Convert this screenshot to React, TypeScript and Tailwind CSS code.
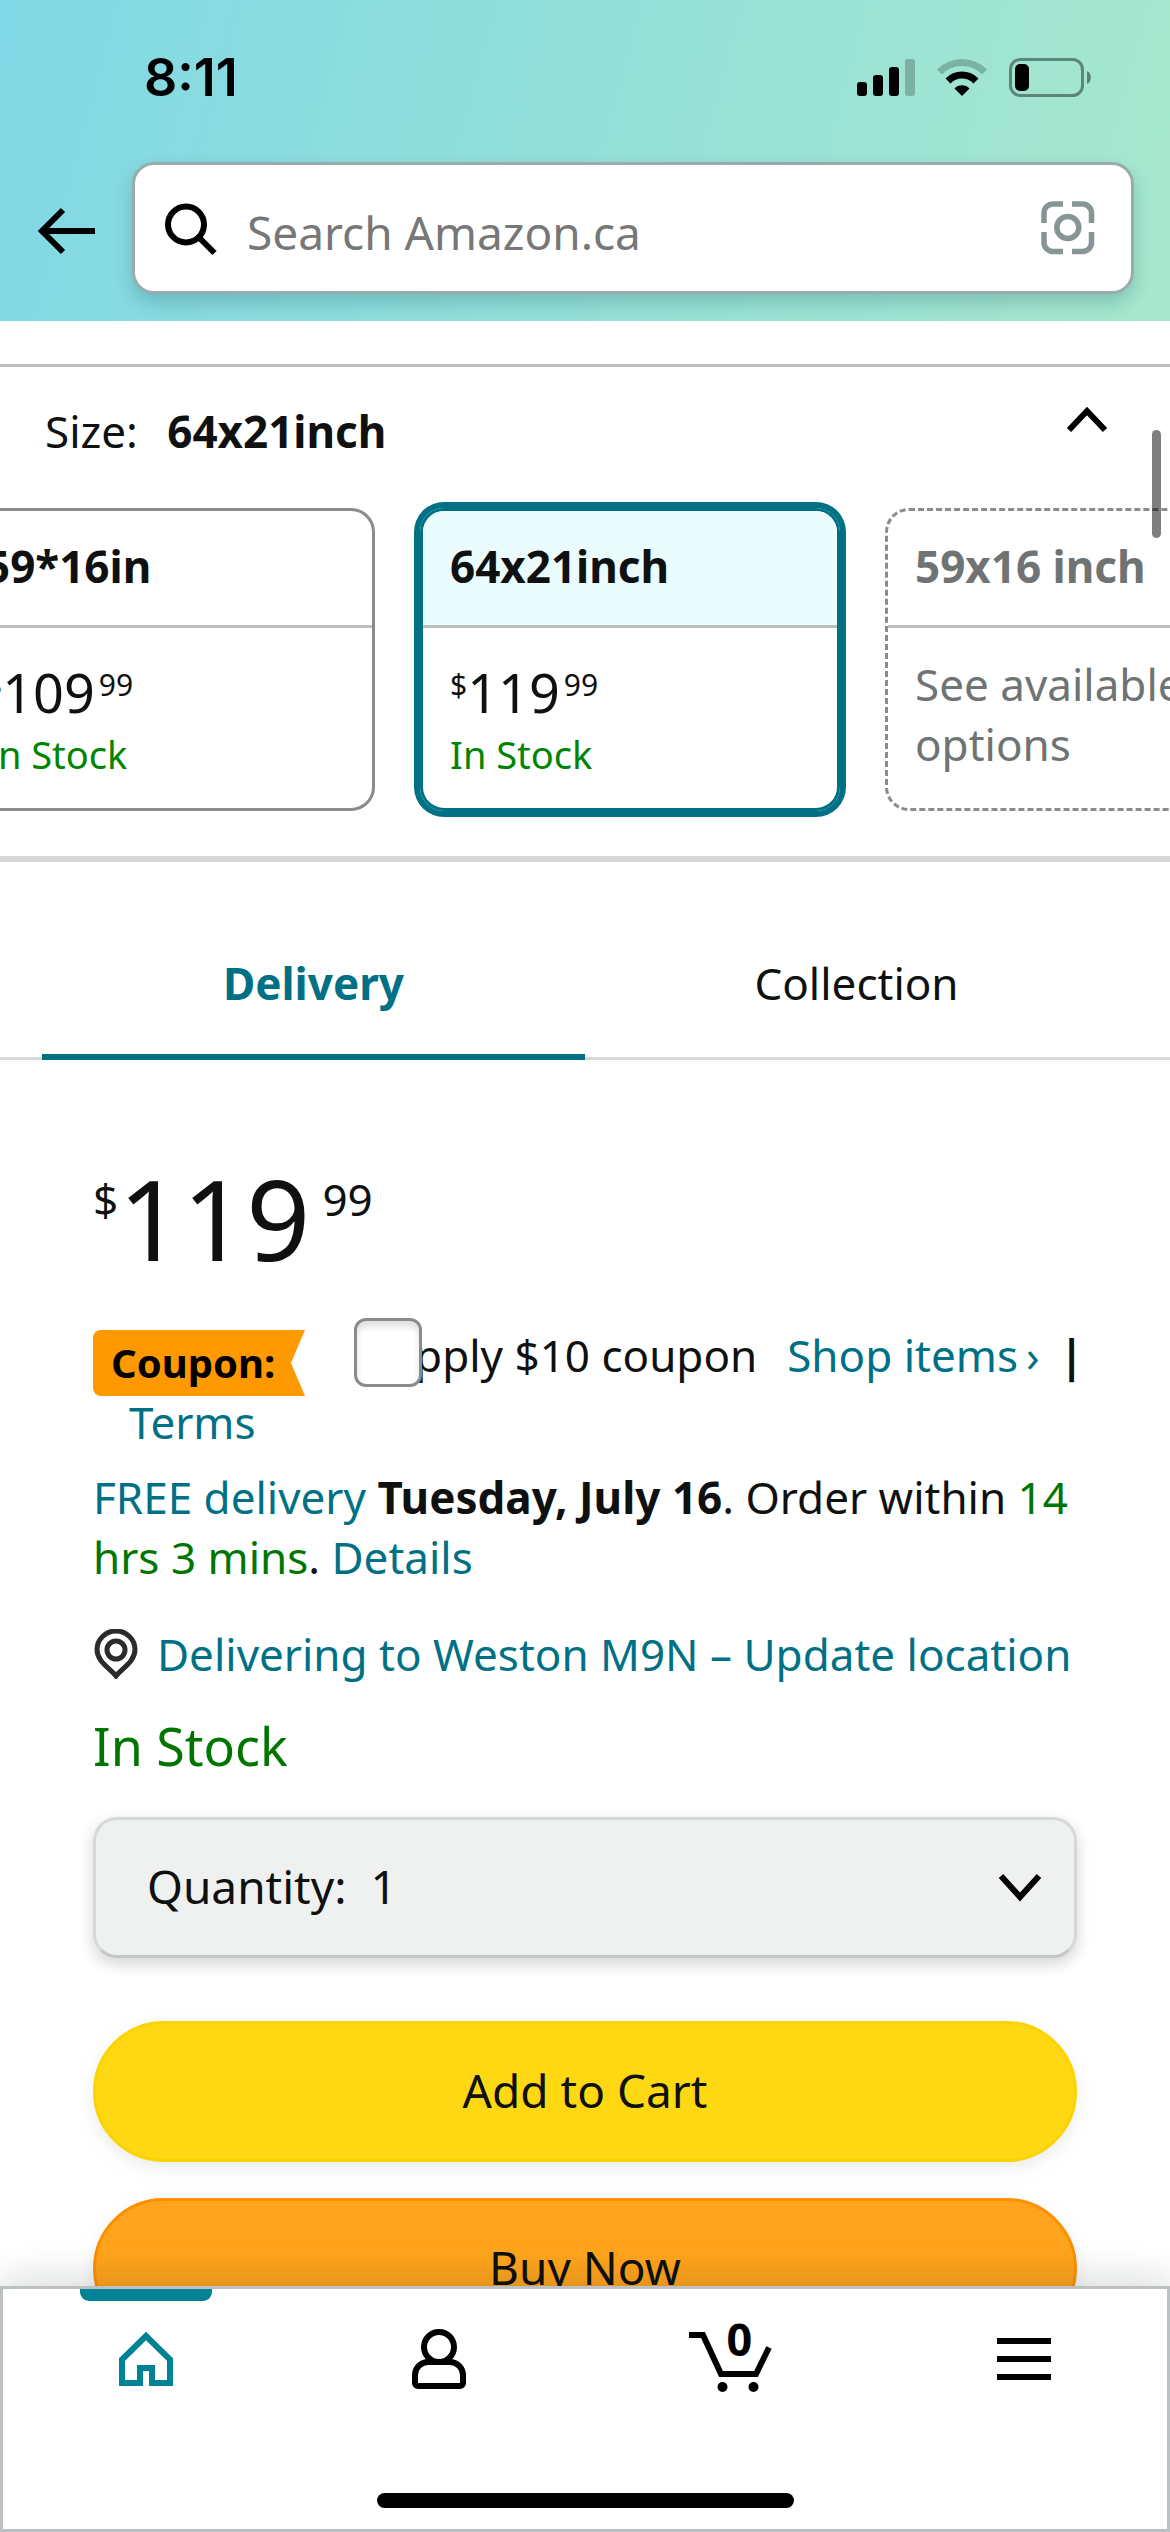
import { useState } from 'react'
import { clsx } from 'clsx'

interface SizeOption {
  name: string
  price?: string
  cents?: string
}

const sizes: SizeOption[] = [
  { name: '59*16in', price: '109', cents: '99' },
  { name: '64x21inch', price: '119', cents: '99' },
  { name: '59x16 inch' },
]

function StatusBar() {
  return (
    <div className="flex items-start justify-between pt-[58px] pr-[79px] pb-16 pl-36">
      <span className="font-['Inter',sans-serif] text-[52px] leading-[40px] font-semibold text-black">8:11</span>
      <div className="flex items-center gap-[22px]">
        <svg width="58" height="38" viewBox="0 0 58 38">
          <rect x="0" y="23" width="10" height="14" rx="3" />
          <rect x="16" y="16" width="10" height="21" rx="3" />
          <rect x="32" y="8" width="10" height="29" rx="3" />
          <rect x="48" y="0" width="10" height="37" rx="3" opacity="0.22" />
        </svg>
        <svg width="50" height="38" viewBox="0 0 50 38" fill="none" stroke="#000" strokeWidth="7">
          <path d="M2.5 13A31.5 31.5 0 0 1 47.5 13" opacity="0.22" />
          <path d="M11 22A19.5 19.5 0 0 1 39 22" />
          <path d="M25 37L17.5 29.5A10.5 10.5 0 0 1 32.5 29.5Z" fill="#000" stroke="none" />
        </svg>
        <svg width="82" height="40" viewBox="0 0 82 40">
          <rect x="1.5" y="1.5" width="72" height="36" rx="10" fill="none" stroke="#000" strokeOpacity="0.42" strokeWidth="3" />
          <rect x="6" y="6" width="14" height="27" rx="5" />
          <path d="M78 13C83 15 83 24 78 26Z" opacity="0.45" />
        </svg>
      </div>
    </div>
  )
}

function Header() {
  return (
    <header className="bg-[linear-gradient(105deg,#80d8e5,#a7e8cd)] pb-[27px]">
      <StatusBar />
      <div className="flex items-center pr-9 pl-9">
        <button aria-label="Back" className="w-24 shrink-0 pt-1.5">
          <svg width="60" height="48" viewBox="0 0 60 48" fill="none" stroke="#000" strokeWidth="6">
            <path d="M59 24H6" />
            <path d="M27 3L6 24L27 45" />
          </svg>
        </button>
        <div className="flex h-[132px] min-w-0 flex-1 items-center rounded-[22px] border-3 border-[#9aabad] bg-white pr-9 pl-[30px] shadow-[0_9px_18px_rgba(0,70,80,0.22)]">
          <svg className="shrink-0" width="54" height="56" viewBox="0 0 54 56" fill="none" stroke="#000" strokeWidth="6">
            <circle cx="21" cy="24.500" r="18" />
            <path d="M33.500 37L49.500 53" />
          </svg>
          <input
            type="search"
            aria-label="Search Amazon.ca"
            placeholder="Search Amazon.ca"
            className="min-w-0 flex-1 appearance-none bg-transparent pt-2 pl-7 text-[46px] outline-none placeholder:text-[#777]"
          />
          <button aria-label="Scan" className="shrink-0">
            <svg width="54" height="54" viewBox="0 0 54 54" fill="none" stroke="#879596" strokeWidth="5.5">
              <path d="M3 22V12A9 9 0 0 1 12 3H22" />
              <path d="M31 3H41A9 9 0 0 1 50.500 12V22" />
              <path d="M50.500 31V41A9 9 0 0 1 41 50.500H31" />
              <path d="M22 50.500H12A9 9 0 0 1 3 41V31" />
              <circle cx="26.800" cy="26.500" r="11" />
            </svg>
          </button>
        </div>
      </div>
    </header>
  )
}

interface SizeCardProps {
  option: SizeOption
  selected: boolean
  onSelect: () => void
}

function SizeCard({ option, selected, onSelect }: SizeCardProps) {
  const available = option.price !== undefined

  return (
    <button
      aria-pressed={selected}
      onClick={onSelect}
      className={clsx(
        'flex w-[420px] shrink-0 flex-col overflow-hidden rounded-3xl border-3 text-left',
        selected && 'border-[#007185] ring-6 ring-[#007185]',
        !selected && 'border-[#888c8c]',
        !available && 'border-dashed text-[#6f7373]'
      )}
    >
      <span className={clsx('w-full border-b-3 border-[#bbbfbf] px-[27px] pt-[25px] pb-[29px] font-bold', selected && 'bg-[#ebfcff]')}>
        {option.name}
      </span>
      <span className="block px-[27px] pt-[26px] pb-[30px]">
        {available ? (
          <>
            <span className="flex items-start">
              <span className="text-[30px] leading-[62px]">$</span>
              <span className="text-[54px] leading-[76px]">{option.price}</span>
              <span className="pl-1 text-[30px] leading-[62px]">{option.cents}</span>
            </span>
            <span className="block text-[38px] leading-[48px] text-[#008500]">In Stock</span>
          </>
        ) : (
          'See available options'
        )}
      </span>
    </button>
  )
}

function SizePicker() {
  const [selected, setSelected] = useState('64x21inch')

  return (
    <section className="mt-[43px] overflow-hidden border-t-3 border-b-6 border-t-[#bbbfbf] border-b-[#d5d7d9] pt-[34px] pb-[45px]">
      <div className="flex items-start justify-between pr-[60px] pl-[45px]">
        <h2>
          Size: <span className="ml-[18px] font-bold">{selected}</span>
        </h2>
        <button aria-label="Collapse sizes">
          <svg width="48" height="36" viewBox="0 0 48 36" fill="none" stroke="#000" strokeWidth="6">
            <path d="M7 29L25 10L43 29" />
          </svg>
        </button>
      </div>
      <div className="mt-[47px] -ml-[45px] flex gap-[45px]">
        {sizes.map((option) => (
          <SizeCard
            key={option.name}
            option={option}
            selected={option.name === selected}
            onSelect={() => setSelected(option.name)}
          />
        ))}
      </div>
    </section>
  )
}

function Tabs() {
  const [tab, setTab] = useState('Delivery')

  return (
    <div role="tablist" className="flex border-b-3 border-[#d5d9d9] px-[42px]">
      {['Delivery', 'Collection'].map((name) => (
        <button
          key={name}
          role="tab"
          aria-selected={tab === name}
          onClick={() => setTab(name)}
          className={clsx(
            '-mb-[3px] flex-1 border-b-6 pt-[91px] pb-[41px]',
            tab === name ? 'border-[#007185] font-bold text-[#007185]' : 'border-transparent'
          )}
        >
          {name}
        </button>
      ))}
    </div>
  )
}

function CouponRow() {
  return (
    <div className="mt-10">
      <div className="flex items-start whitespace-nowrap">
        <span className="mt-3 w-[212px] shrink-0 rounded-l-lg bg-[#ff9900] pl-[18px] text-[40px] leading-[66px] font-bold text-black [clip-path:polygon(0_0,100%_0,calc(100%-14px)_50%,100%_100%,0_100%)]">
          Coupon:
        </span>
        <label className="ml-[49px] flex items-start">
          <input
            type="checkbox"
            className="relative z-10 h-[69px] w-[68px] shrink-0 appearance-none rounded-xl border-3 border-[#888c8c] bg-white shadow-[inset_0_6px_6px_rgba(15,17,17,0.12)] checked:bg-[#007185]"
          />
          <span className="-ml-[35px] pt-[7px]">Apply $10 coupon</span>
        </label>
        <span className="ml-[30px] pt-[7px]">
          <a href="#shop" className="text-[#007185]">
            Shop items<span className="ml-2">›</span>
          </a>
          <span className="ml-5 font-bold">|</span>
        </span>
      </div>
      <a href="#terms" className="block pl-9 leading-[52px] text-[#007185]">
        Terms
      </a>
    </div>
  )
}

function BuyBox() {
  return (
    <section className="px-[93px] pt-[98px] pb-16">
      <div className="flex items-start">
        <span className="leading-[82px]">$</span>
        <span className="text-[112px] leading-[120px]">119</span>
        <span className="pl-3 leading-[82px]">99</span>
      </div>

      <CouponRow />

      <p className="mt-[19px]">
        <a href="#delivery" className="text-[#007185]">FREE delivery</a> <strong>Tuesday, July 16</strong>. Order within{' '}
        <span className="text-[#007600]">14 hrs 3 mins</span>.{' '}
        <a href="#details" className="text-[#007185]">Details</a>
      </p>

      <a href="#location" className="mt-[37px] flex items-center gap-[18px] whitespace-nowrap text-[#007185]">
        <svg className="shrink-0" width="46" height="50" viewBox="0 0 46 50" fill="none" stroke="#2b2b2b">
          <path d="M23 47C18 40 4 33 4 20.500A19 18.500 0 0 1 42 20.500C42 33 28 40 23 47Z" strokeWidth="5" />
          <circle cx="23" cy="21" r="9" strokeWidth="5" />
        </svg>
        Delivering to Weston M9N – Update location
      </a>

      <p className="mt-6 text-[52px] leading-[76px] text-[#007600]">In Stock</p>

      <label className="relative mt-[33px] flex h-[141px] items-center rounded-3xl border-3 border-[#d5d9d9] border-b-[#c3c7c7] bg-[#eff1f1] pb-1 pl-[51px] text-[46px] shadow-[0_6px_15px_rgba(15,17,17,0.18)]">
        Quantity:
        <select className="h-full flex-1 appearance-none bg-transparent pl-6 outline-none">
          <option>1</option>
          <option>2</option>
          <option>3</option>
        </select>
        <svg className="pointer-events-none absolute right-8" width="44" height="32" viewBox="0 0 44 32" fill="none" stroke="#000" strokeWidth="6">
          <path d="M3 6L22 27L41 6" />
        </svg>
      </label>

      <button className="mt-[63px] h-[141px] w-full rounded-full border-3 border-[#fcd200] bg-[#ffd814] pb-1 text-[46px] shadow-[0_6px_15px_rgba(213,217,217,0.5)]">
        Add to Cart
      </button>
      <button className="mt-9 h-[141px] w-full rounded-full border-3 border-[#ff8f00] bg-[#ffa41c] pb-1 text-[46px] shadow-[0_6px_15px_rgba(213,217,217,0.5)]">
        Buy Now
      </button>
    </section>
  )
}

function BottomNav() {
  return (
    <nav className="relative z-10 shrink-0 border-3 border-[#bbc0c2] bg-white pb-[21px] shadow-[0_-6px_36px_rgba(15,17,17,0.16)]">
      <div className="-mx-[3px] grid grid-cols-4">
        <a href="#home" aria-label="Home" aria-current="page" className="flex flex-col items-center">
          <span className="h-3 w-[132px] rounded-b-[9px] bg-[#008296]" />
          <svg className="mt-[30px]" width="54" height="60" viewBox="0 0 54 60" fill="none" stroke="#008296" strokeWidth="6">
            <path d="M3 52V28.500L27 5L51 28.500V52H33V37H21V52Z" strokeLinejoin="miter" />
          </svg>
        </a>
        <a href="#account" aria-label="Account" className="flex justify-center pt-10">
          <svg width="54" height="60" viewBox="0 0 54 60" fill="none" stroke="#000" strokeWidth="6">
            <circle cx="27" cy="18" r="15" />
            <path d="M16 33H38A13 13 0 0 1 51 46V54A3 3 0 0 1 48 57H6A3 3 0 0 1 3 54V46A13 13 0 0 1 16 33Z" />
          </svg>
        </a>
        <a href="#cart" aria-label="Cart" className="relative flex justify-center pt-[43px]">
          <svg width="84" height="60" viewBox="0 0 84 60">
            <path d="M0 3H14L32 42H67L80 15.500" fill="none" stroke="#000" strokeWidth="6" />
            <circle cx="33.500" cy="55" r="5" />
            <circle cx="64.500" cy="55" r="5" />
          </svg>
          <span className="absolute inset-x-0 top-5 pl-4 text-center text-[45px] font-bold text-black">0</span>
        </a>
        <button aria-label="Menu" className="flex justify-center pt-[49px]">
          <svg width="54" height="42" viewBox="0 0 54 42">
            <rect width="54" height="6" />
            <rect y="18" width="54" height="6" />
            <rect y="36" width="54" height="6" />
          </svg>
        </button>
      </div>
      <div className="mx-auto mt-[101px] h-[15px] w-[417px] rounded-full bg-black" />
    </nav>
  )
}

export default function App() {
  return (
    <div className="flex h-screen flex-col overflow-hidden bg-white font-['Noto_Sans',sans-serif] text-[44px] leading-[60px] text-[#0f1111]">
      <Header />
      <main className="relative min-h-0 flex-1 overflow-x-hidden overflow-y-auto [scrollbar-width:none]">
        <SizePicker />
        <Tabs />
        <BuyBox />
        {/* scroll position thumb */}
        <div className="absolute top-[109px] right-[9px] h-[108px] w-[9px] rounded-full bg-black/50" />
      </main>
      <BottomNav />
    </div>
  )
}
